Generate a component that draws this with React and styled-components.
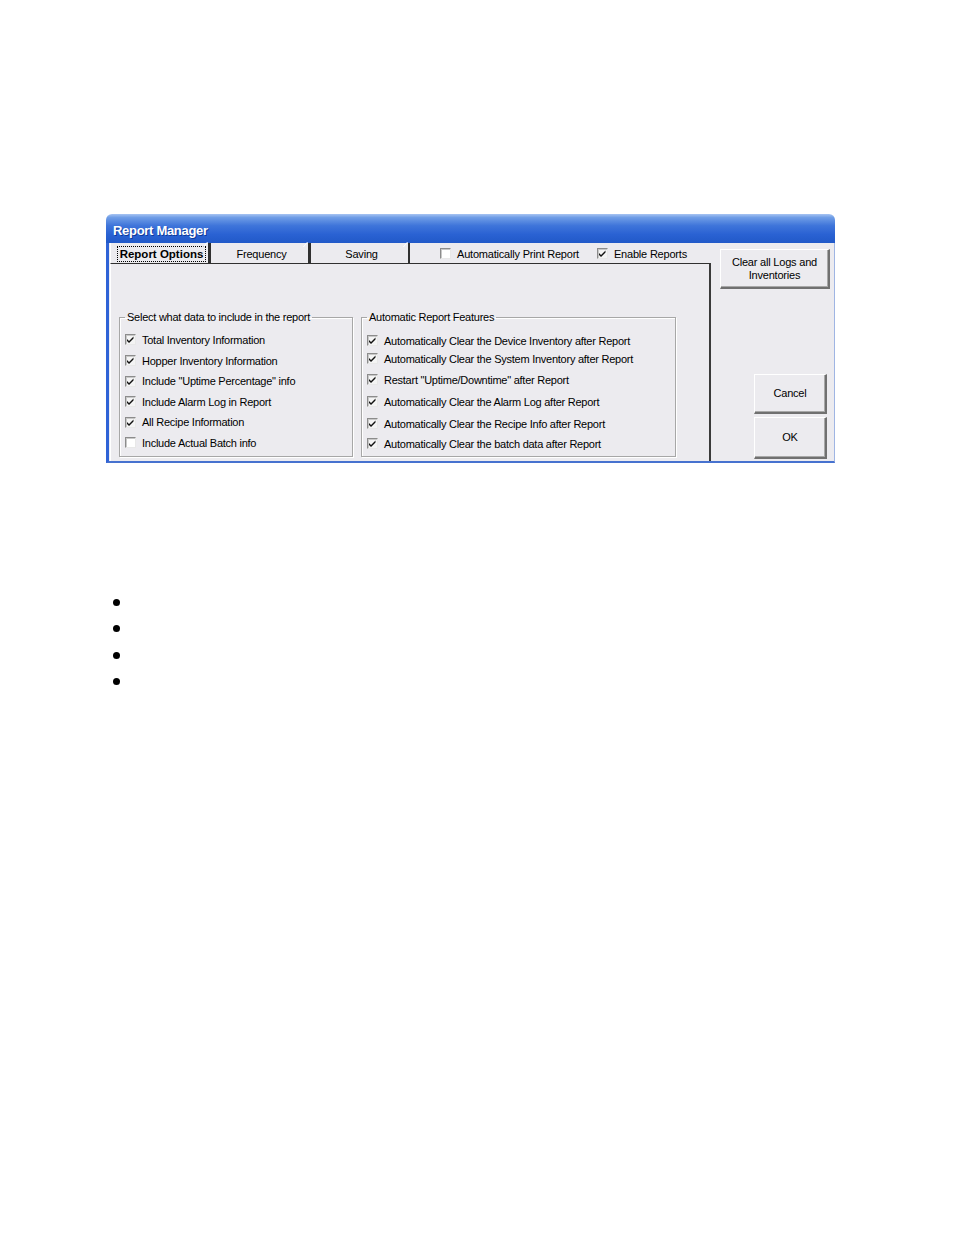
import React from 'react';
import styled, { createGlobalStyle } from 'styled-components';

const GlobalStyle = createGlobalStyle`
  html, body {
    margin: 0;
    padding: 0;
    background: #ffffff;
  }
  body {
    font-family: "Liberation Sans", Arial, sans-serif;
    color: #000;
  }
`;

const Page = styled.div`
  width: 954px;
  height: 1235px;
  padding-top: 214px;
  box-sizing: border-box;
`;

const Dialog = styled.div`
  margin-left: 106px;
  width: 729px;
  height: 249px;
  display: flex;
  flex-direction: column;
  border-radius: 6px 6px 0 0;
  overflow: hidden;
  box-sizing: border-box;
`;

const TitleBar = styled.div`
  height: 29px;
  flex-shrink: 0;
  display: flex;
  align-items: center;
  padding-left: 7px;
  padding-top: 3px;
  box-sizing: border-box;
  background: linear-gradient(#a7c4f2 0%, #6f9de6 12%, #3f75da 40%, #2a62d3 70%, #2159c8 100%);
  color: #fff;
  font-weight: bold;
  font-size: 13px;
  letter-spacing: -0.3px;
  text-shadow: 1px 1px 0 #0f3a9a;
`;

const Frame = styled.div`
  flex: 1;
  display: flex;
  background: #ecebef;
  border-left: 3px solid #2f63d6;
  border-bottom: 2px solid #4772cf;
  border-right: 1px solid #9fb5e3;
`;

const LeftColumn = styled.div`
  width: 601px;
  display: flex;
  flex-direction: column;
  padding-left: 1px;
`;

const TabRow = styled.div`
  height: 20px;
  display: flex;
  font-size: 11px;
  letter-spacing: -0.2px;
`;

const Tab = styled.div`
  width: 100px;
  box-sizing: border-box;
  display: flex;
  align-items: center;
  justify-content: center;
  position: relative;
  border-left: 1px solid ${({ $active }) => ($active ? '#ffffff' : '#303030')};
  border-right: 2px solid #303030;
  font-weight: ${({ $active }) => ($active ? 'bold' : 'normal')};
  font-size: ${({ $active }) => ($active ? '11.5px' : '11px')};
  padding: 2px 0 0 4px;

  &::after {
    content: '';
    position: absolute;
    top: -1px;
    right: -3px;
    width: 5px;
    height: 5px;
    border-left: 1px solid #ffffff;
    transform: skewX(-40deg);
  }
`;

const Focus = styled.span`
  outline: 1px dotted #000;
  outline-offset: 1px;
  padding: 0 1px;
  letter-spacing: 0;
`;

const TabOptions = styled.div`
  display: flex;
  align-items: center;
  gap: 18px;
  margin-left: 30px;
  padding-top: 1px;
`;

const Option = styled.label`
  display: flex;
  align-items: center;
  gap: 6px;
  white-space: nowrap;
`;

const Box = styled.span`
  width: 11px;
  height: 11px;
  box-sizing: border-box;
  flex-shrink: 0;
  display: inline-flex;
  align-items: center;
  justify-content: center;
  background: ${({ $checked }) => ($checked ? '#f4f4f4' : '#ffffff')};
  border-top: 1px solid #8c8c8c;
  border-left: 1px solid #8c8c8c;
  border-bottom: 1px solid #e8e8e8;
  border-right: 1px solid #e8e8e8;
  box-shadow: inset 1px 1px 0 #c8c8c8;
`;

const Panel = styled.div`
  flex: 1;
  display: flex;
  align-items: flex-end;
  gap: 8px;
  padding: 0 0 4px 8px;
  box-sizing: border-box;
  border-top: 1px solid #303030;
  border-left: 1px solid #ffffff;
  border-right: 2px solid #3a3a3a;
`;

const Group = styled.fieldset`
  margin: 0;
  width: ${({ $width }) => $width}px;
  height: 146px;
  box-sizing: border-box;
  border: 1px solid #a7a7a7;
  box-shadow: inset 1px 1px 0 #ffffff, 1px 1px 0 #ffffff;
  padding: ${({ $top }) => $top}px 0 0 5px;
  display: flex;
  flex-direction: column;
  font-size: 11px;
  letter-spacing: -0.25px;
`;

const Legend = styled.legend`
  padding: 0 2px;
  margin-left: 0;
  font-size: 11px;
`;

const Item = styled.label`
  display: flex;
  align-items: center;
  gap: 6px;
  height: ${({ $h }) => $h}px;
  flex-shrink: 0;
  white-space: nowrap;
`;

const RightColumn = styled.div`
  flex: 1;
  display: flex;
  flex-direction: column;
  align-items: flex-end;
  padding-top: 6px;
`;

const Button = styled.button`
  width: ${({ $w }) => $w}px;
  height: ${({ $h }) => $h}px;
  margin: ${({ $m }) => $m};
  background: #ecebef;
  font-family: "Liberation Sans", Arial, sans-serif;
  font-size: 11px;
  letter-spacing: -0.2px;
  line-height: 13px;
  color: #000;
  padding: 0;
  border-top: 1px solid #ffffff;
  border-left: 1px solid #ffffff;
  border-right: 2px solid #707070;
  border-bottom: 2px solid #707070;
  box-shadow: inset -1px -1px 0 #a8a8a8;
`;

const Bullets = styled.ul`
  list-style: none;
  margin: 136px 0 0 113px;
  padding: 0;
  display: flex;
  flex-direction: column;
  gap: 19.3px;
`;

const Dot = styled.li`
  width: 7px;
  height: 7px;
  border-radius: 50%;
  background: #000;
`;

const Check = () => (
  <svg width="9" height="9" viewBox="0 0 9 9">
    <path d="M1 4 L3 6 L7.5 1.5 L7.5 3.5 L3 8 L1 6 Z" fill="#111" />
  </svg>
);

const CheckBox = ({ checked }) => <Box $checked={checked}>{checked && <Check />}</Box>;

const leftItems = [
  ['Total Inventory Information', true, 21],
  ['Hopper Inventory Information', true, 21],
  ['Include "Uptime Percentage" info', true, 20],
  ['Include Alarm Log in Report', true, 21],
  ['All Recipe Information', true, 20],
  ['Include Actual Batch info', false, 21],
];

const rightItems = [
  ['Automatically Clear the Device Inventory after Report', true, 18],
  ['Automatically Clear the System Inventory after Report', true, 18],
  ['Restart "Uptime/Downtime" after Report', true, 24],
  ['Automatically Clear the Alarm Log after Report', true, 20],
  ['Automatically Clear the Recipe Info after Report', true, 24],
  ['Automatically Clear the batch data after Report', true, 16],
];

export default function App() {
  return (
    <>
      <GlobalStyle />
      <Page>
        <Dialog>
          <TitleBar>Report Manager</TitleBar>
          <Frame>
            <LeftColumn>
              <TabRow>
                <Tab $active>
                  <Focus>Report Options</Focus>
                </Tab>
                <Tab>Frequency</Tab>
                <Tab>Saving</Tab>
                <TabOptions>
                  <Option>
                    <CheckBox checked={false} />
                    Automatically Print Report
                  </Option>
                  <Option>
                    <CheckBox checked />
                    Enable Reports
                  </Option>
                </TabOptions>
              </TabRow>
              <Panel>
                <Group $width={234} $top={6}>
                  <Legend>Select what data to include in the report</Legend>
                  {leftItems.map(([label, checked, h]) => (
                    <Item key={label} $h={h}>
                      <CheckBox checked={checked} />
                      {label}
                    </Item>
                  ))}
                </Group>
                <Group $width={315} $top={8.5}>
                  <Legend>Automatic Report Features</Legend>
                  {rightItems.map(([label, checked, h]) => (
                    <Item key={label} $h={h}>
                      <CheckBox checked={checked} />
                      {label}
                    </Item>
                  ))}
                </Group>
              </Panel>
            </LeftColumn>
            <RightColumn>
              <Button $w={110} $h={40} $m="0 4px 0 0">
                Clear all Logs and
                <br />
                Inventories
              </Button>
              <Button $w={73} $h={40} $m="85px 7px 0 0">Cancel</Button>
              <Button $w={73} $h={42} $m="3px 7px 0 0">OK</Button>
            </RightColumn>
          </Frame>
        </Dialog>
        <Bullets>
          <Dot />
          <Dot />
          <Dot />
          <Dot />
        </Bullets>
      </Page>
    </>
  );
}
